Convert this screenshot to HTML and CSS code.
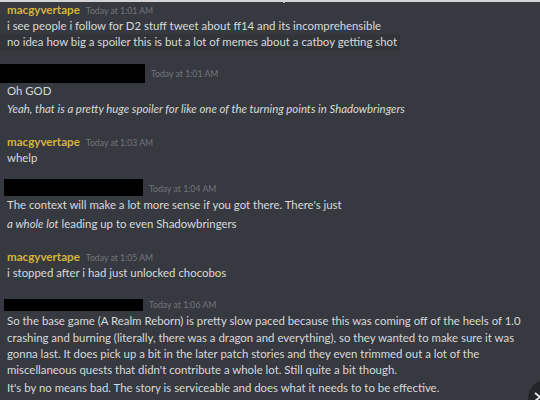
FILE: index.html
```html
<!DOCTYPE html>
<html lang="en">
<head>
    <meta charset="UTF-8">
    <title>Chat log</title>
    <link rel="stylesheet" href="styles.css">
</head>
<body>

<div class="chat">
    <span class="edge-mark"></span>

    <div class="group g1">
        <div class="head">
            <span class="name">macgyvertape</span>
            <span class="time">Today at 1:01 AM</span>
        </div>
        <div class="text">i see people i follow for D2 stuff tweet about ff14 and its incomprehensible</div>
        <div class="text hover">no idea how big a spoiler this is but a lot of memes about a catboy getting shot</div>
    </div>

    <div class="group g2">
        <div class="head redacted-head">
            <span class="redact first"></span>
            <span class="time">Today at 1:01 AM</span>
        </div>
        <div class="text">Oh GOD</div>
        <div class="text next"><em>Yeah, that is a pretty huge spoiler for like one of the turning points in Shadowbringers</em></div>
    </div>

    <div class="group g3">
        <div class="head">
            <span class="name">macgyvertape</span>
            <span class="time">Today at 1:03 AM</span>
        </div>
        <div class="text">whelp</div>
    </div>

    <div class="group g4">
        <div class="head redacted-head">
            <span class="redact"></span>
            <span class="time">Today at 1:04 AM</span>
        </div>
        <div class="text">The context will make a lot more sense if you got there. There's just</div>
        <div class="text next"><em>a whole lot</em> leading up to even Shadowbringers</div>
    </div>

    <div class="group g5">
        <div class="head">
            <span class="name">macgyvertape</span>
            <span class="time">Today at 1:05 AM</span>
        </div>
        <div class="text">i stopped after i had just unlocked chocobos</div>
    </div>

    <div class="group g6">
        <div class="head redacted-head">
            <span class="redact short"></span>
            <span class="time">Today at 1:06 AM</span>
        </div>
        <div class="text">So the base game (A Realm Reborn) is pretty slow paced because this was coming off of the heels of 1.0 crashing and burning (literally, there was a dragon and everything), so they wanted to make sure it was gonna last. It does pick up a bit in the later patch stories and they even trimmed out a lot of the miscellaneous quests that didn't contribute a whole lot. Still quite a bit though.</div>
        <div class="text next">It's by no means bad. The story is serviceable and does what it needs to to be effective.</div>
    </div>

    <div class="jump">
        <svg width="10" height="12" viewBox="0 0 10 12"><path d="M2 2 L7 6 L2 10" fill="none" stroke="#e8e8ea" stroke-width="1.8"/></svg>
    </div>
</div>

</body>
</html>
```

FILE: styles.css
```css
body {
    margin: 0;
    padding: 0;
    background-color: #36393f;
    font-family: 'Lato', 'Open Sans', sans-serif;
    font-size: 11.4px;
    color: #d8d9db;
    overflow: hidden;
}
.chat {
    position: relative;
    height: 400px;
    border-top: 2px solid #d4d4d6;
    box-sizing: border-box;
    overflow: hidden;
}
.edge-mark {
    position: absolute;
    left: 282px;
    top: 0;
    width: 2px;
    height: 1px;
    border: 1px solid #333;
    border-top: 0;
    background: #bbb;
}
.group {
    padding-left: 7px;
    padding-right: 4px;
}
.head {
    display: flex;
    align-items: baseline;
    gap: 6px;
    height: 16px;
    line-height: 16px;
}
.name {
    color: #d4b43c;
    font-weight: 700;
    font-size: 11.6px;
}
.time {
    color: #72767d;
    font-size: 8.7px;
}
.redacted-head {
    align-items: center;
    margin-left: -3px;
    height: 19px;
}
.redacted-head .time {
    padding-top: 2px;
}
.redact {
    display: block;
    width: 139px;
    height: 17px;
    background: #000;
}
.redact.first {
    margin-left: -4px;
    width: 145px;
    height: 19px;
}
.redact.short {
    height: 12px;
    margin-top: 3px;
}
.text {
    line-height: 16.4px;
}
.text.next {
    margin-top: 2px;
}
.hover {
    width: fit-content;
    margin-left: -7px;
    padding-left: 7px;
    padding-right: 3px;
    background: #313439;
}
.g1 { padding-top: 0; }
.g2 { padding-top: 13px; }
.g3 { padding-top: 16px; }
.g4 { padding-top: 12px; }
.g4 .text.next { margin-top: 3px; }
.g5 { padding-top: 16px; }
.g6 { padding-top: 13px; }
.g6 .text.next { margin-top: 1px; }
.jump {
    position: absolute;
    left: 528px;
    top: 377px;
    width: 40px;
    height: 40px;
    border-radius: 50%;
    background: #232529;
    padding: 12px 0 0 5px;
    box-sizing: border-box;
}
```
